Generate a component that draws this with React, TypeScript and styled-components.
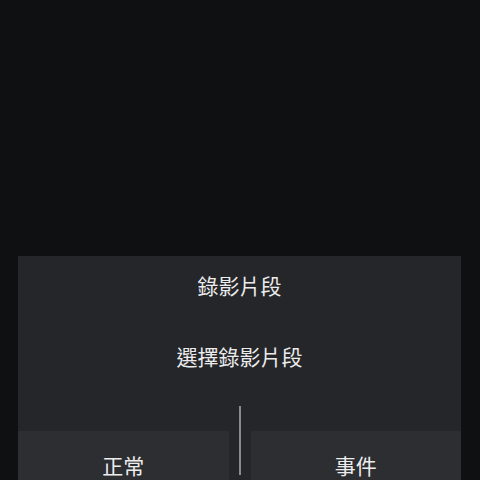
import styled, { createGlobalStyle } from "styled-components";

const GlobalStyle = createGlobalStyle`
  html, body {
    margin: 0;
    padding: 0;
    background: #0f1012;
  }
  body {
    font-family: "Noto Sans CJK TC", "Noto Sans", sans-serif;
  }
`;

const Screen = styled.div`
  height: 480px;
  overflow: hidden;
  background: #0f1012;
  padding: 256px 19px 0 18px;
  box-sizing: border-box;
`;

const Sheet = styled.div`
  background: #24262a;
  padding-top: 14px;
  display: flex;
  flex-direction: column;
  align-items: center;
`;

const Title = styled.div`
  color: #ececec;
  font-size: 21px;
  line-height: 30px;
`;

const Subtitle = styled.div`
  color: #ececec;
  font-size: 21px;
  line-height: 30px;
  margin-top: 41px;
`;

const Footer = styled.div`
  align-self: stretch;
  display: grid;
  grid-template-columns: 1fr 2px 1fr;
  column-gap: 10px;
  margin-top: 35px;
`;

const Choice = styled.div`
  margin-top: 25px;
  height: 70px;
  padding-bottom: 2px;
  box-sizing: border-box;
  background: #2c2e32;
  color: #ececec;
  font-size: 21px;
  display: flex;
  align-items: center;
  justify-content: center;
`;

const Divider = styled.div`
  height: 69px;
  background: #8a8c90;
`;

export default function App() {
  return (
    <>
      <GlobalStyle />
      <Screen>
        <Sheet>
          <Title>錄影片段</Title>
          <Subtitle>選擇錄影片段</Subtitle>
          <Footer>
            <Choice>正常</Choice>
            <Divider />
            <Choice>事件</Choice>
          </Footer>
        </Sheet>
      </Screen>
    </>
  );
}
